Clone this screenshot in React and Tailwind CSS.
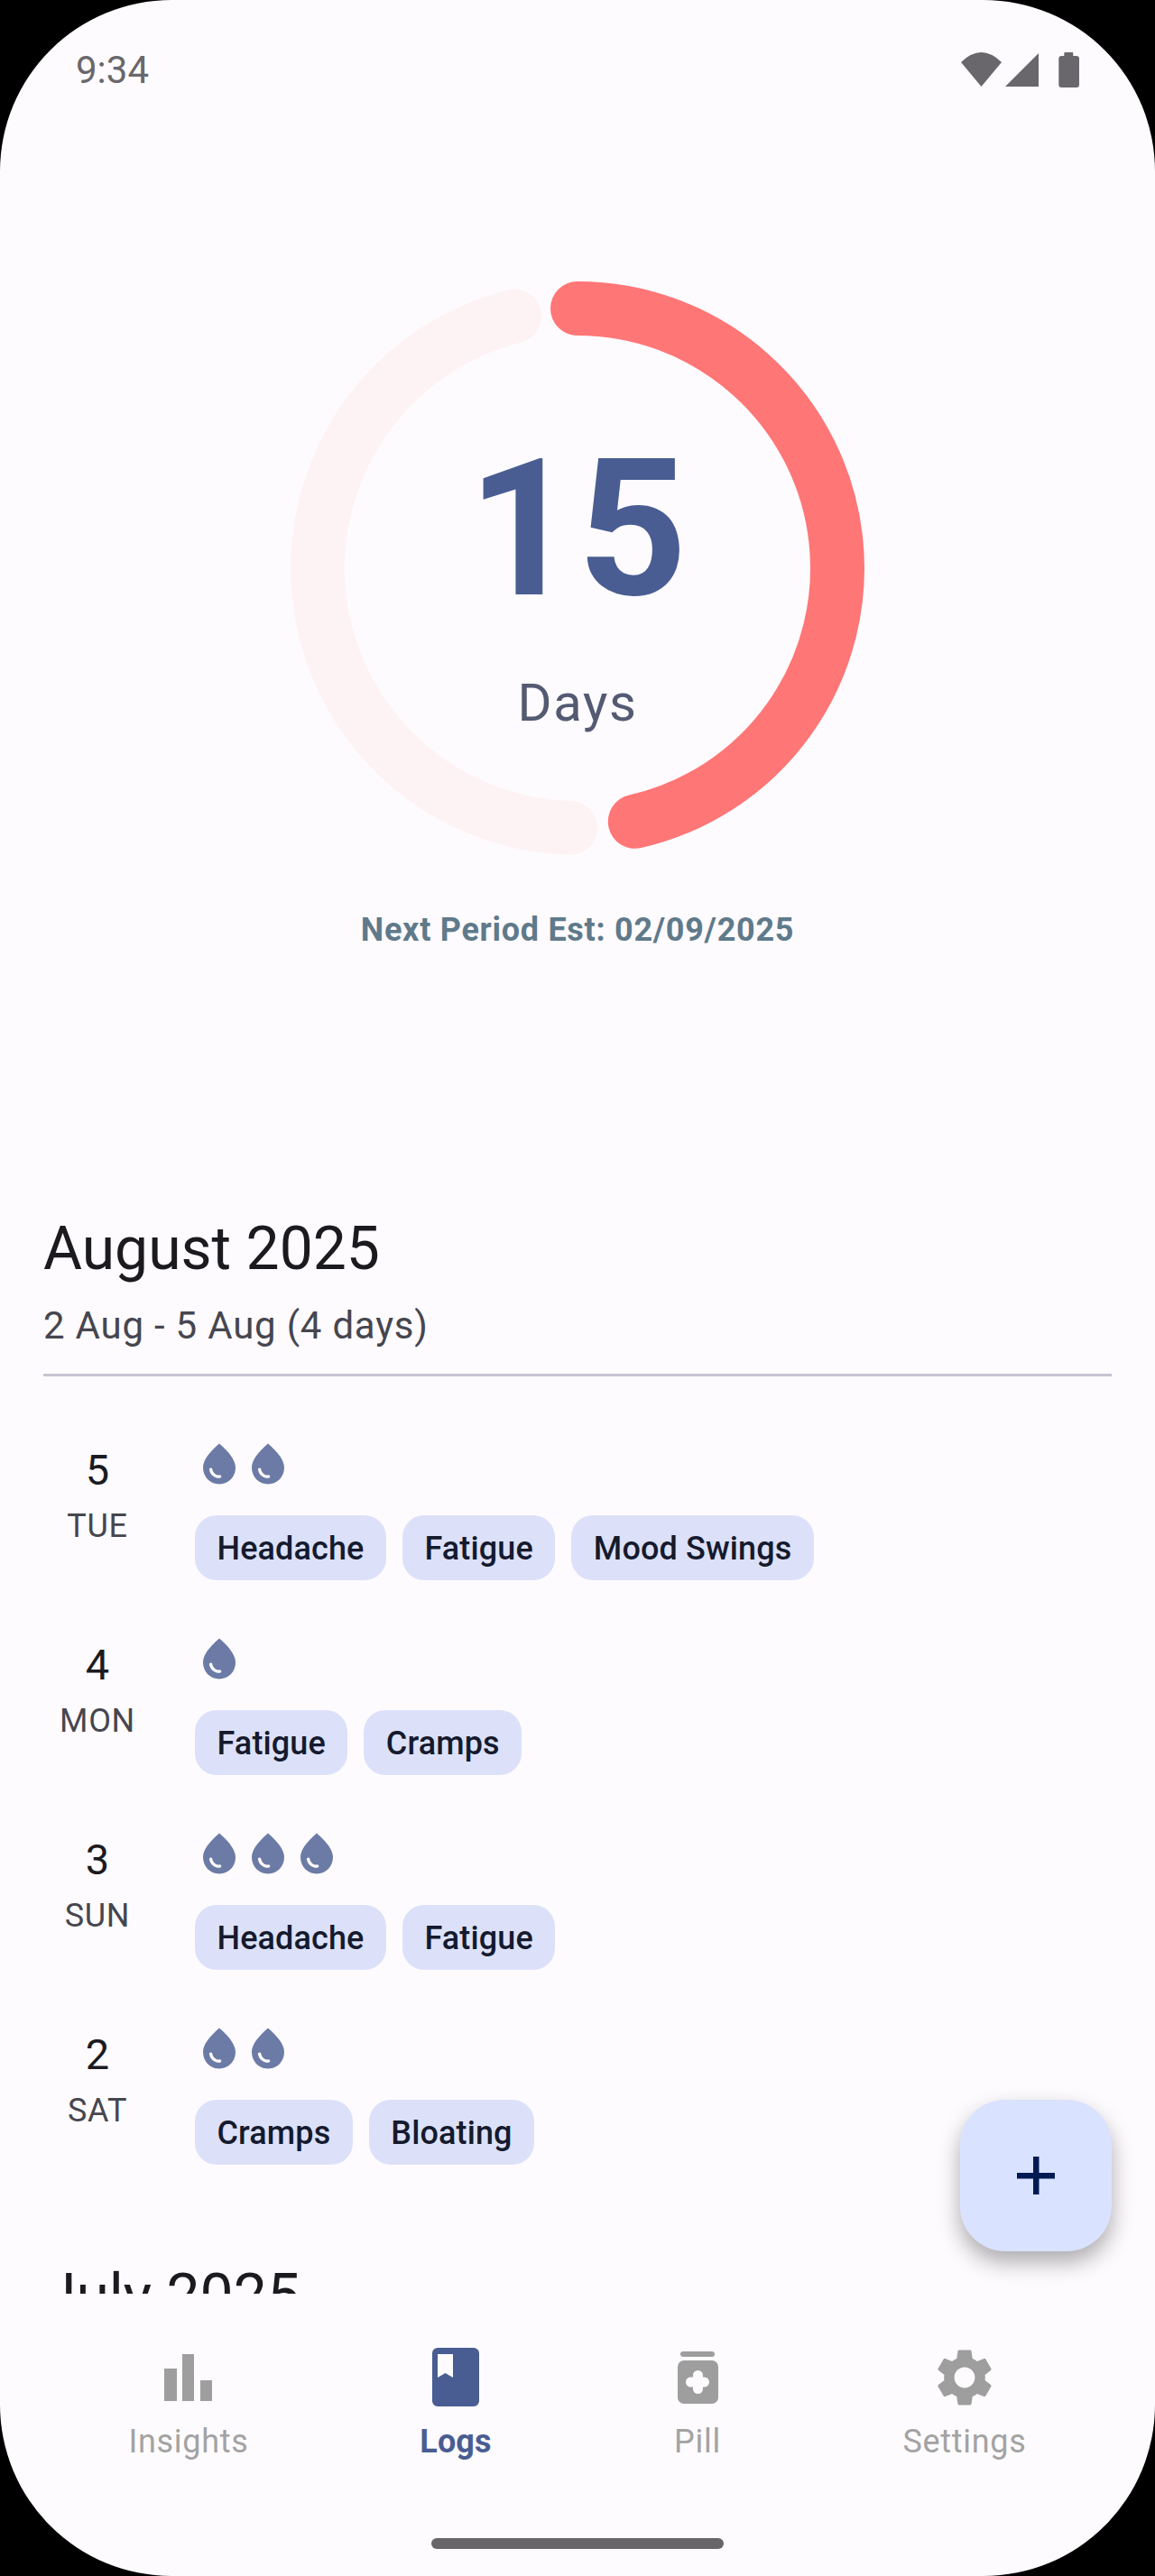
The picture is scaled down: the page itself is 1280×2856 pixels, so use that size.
const polar = (deg) => {
  const a = (deg * Math.PI) / 180;
  return [320 + 288 * Math.sin(a), 320 - 288 * Math.cos(a)];
};
const arc = (from, to) => {
  const [x1, y1] = polar(from);
  const [x2, y2] = polar(to);
  return `M${x1} ${y1}A288 288 0 0 1 ${x2} ${y2}`;
};

const Drop = () => (
  <svg viewBox="0 0 24 24" className="w-[54px] h-[54px] shrink-0" fill="#6b7ba6">
    <path
      fillRule="evenodd"
      d="M12 2c-5.33 4.55-8 8.48-8 11.8 0 4.98 3.8 8.2 8 8.2s8-3.22 8-8.2c0-3.32-2.67-7.25-8-11.8z M7.83 14c.37 0 .67.26.74.62.41 2.22 2.28 2.98 3.64 2.87.43-.02.79.32.79.75 0 .4-.32.73-.72.75-2.13.13-4.62-1.09-5.19-4.12-.08-.45.28-.87.74-.87z"
    />
  </svg>
);

const Chip = ({ label }) => (
  <div className="h-[72px] px-[24.5px] pt-[2px] rounded-[24px] bg-[#dce1f9] flex items-center text-[36px] tracking-[0.12px] font-medium text-[#151a2e]">
    {label}
  </div>
);

const Row = ({ day, dow, drops, chips }) => (
  <div className="flex gap-[48px] mb-[60px]">
    <div className="w-[120px] text-center pt-[6px]">
      <div className="text-[47px] leading-[56px] font-[450] text-[#1b1b1f]">{day}</div>
      <div className="text-[36px] leading-[44px] mt-[12px] tracking-[0.7px] text-[#46464f]">{dow}</div>
    </div>
    <div>
      <div className="flex h-[54px] mb-[30px]">
        {Array.from({ length: drops }).map((_, i) => (
          <Drop key={i} />
        ))}
      </div>
      <div className="flex gap-[18px]">
        {chips.map((c) => (
          <Chip key={c} label={c} />
        ))}
      </div>
    </div>
  </div>
);

const NavItem = ({ label, active, children }) => (
  <div className="flex flex-col items-center">
    <svg viewBox="0 0 76 76" className="w-[76px] h-[76px]">
      {children}
    </svg>
    <div
      className={
        active
          ? "mt-[9px] text-[36px] leading-[48px] tracking-[0.1px] font-bold text-[#495d92]"
          : "mt-[9px] text-[36px] leading-[48px] tracking-[0.7px] text-[#a3a3a3]"
      }
    >
      {label}
    </div>
  </div>
);

export default function App() {
  return (
    <div className="w-[1280px] h-[2856px] bg-black font-['Roboto',sans-serif]">
      <div className="relative w-full h-full rounded-[190px] overflow-hidden bg-[#fefbff] flex flex-col">
        <div className="flex-1 min-h-0 overflow-hidden">
          <div className="h-[154px] px-[84px] flex items-center justify-between">
            <span className="text-[42px] leading-[50px] pt-[2px] text-[#69676b]">9:34</span>
            <svg viewBox="0 0 131 39" className="w-[131px] h-[39px]" fill="#69676b">
              <path d="M0 11Q22.5 -11 45 11L22.5 38Z" />
              <path d="M49 38L86 1V38Z" />
              <rect x="108.3" y="4" width="22.7" height="35" rx="3" />
              <rect x="114.3" y="0" width="10" height="6" rx="1" />
            </svg>
          </div>

          <div className="relative w-[640px] h-[640px] mx-auto mt-[156px]">
            <svg viewBox="0 0 640 640" className="w-[640px] h-[640px]" fill="none" strokeWidth="60" strokeLinecap="round">
              <path d={arc(181.6, 346)} stroke="#fef3f4" />
              <path d={arc(0, 167.2)} stroke="#ff7676" />
            </svg>
            <div className="absolute inset-0 flex flex-col items-center">
              <div className="mt-[157px] text-[212px] leading-[240px] font-bold text-[#495d92]">15</div>
              <div className="mt-[37px] text-[58px] leading-[70px] tracking-[1.6px] text-[#535a72]">Days</div>
            </div>
          </div>

          <div className="mt-[59px] text-center text-[36px] leading-[44px] font-bold tracking-[0.72px] text-[#5f7a8a]">
            Next Period Est: 02/09/2025
          </div>

          <div className="px-[48px] mt-[292px]">
            <div className="text-[66px] leading-[80px] text-[#1b1b1f]">August 2025</div>
            <div className="mt-[18px] text-[42px] leading-[54px] tracking-[0.78px] text-[#46464f]">2 Aug - 5 Aug (4 days)</div>
            <div className="mt-[26px] h-[3px] bg-[#c6c5d0]" />
            <div className="mt-[70px]">
              <Row day="5" dow="TUE" drops={2} chips={["Headache", "Fatigue", "Mood Swings"]} />
              <Row day="4" dow="MON" drops={1} chips={["Fatigue", "Cramps"]} />
              <Row day="3" dow="SUN" drops={3} chips={["Headache", "Fatigue"]} />
              <Row day="2" dow="SAT" drops={2} chips={["Cramps", "Bloating"]} />
            </div>
            <div className="mt-[106px] text-[66px] leading-[80px] text-[#1b1b1f]">July 2025</div>
          </div>
        </div>

        <div className="h-[313px] shrink-0 pt-[55px]">
          <div className="grid grid-cols-[296px_296px_240px_352px] pl-[61px]">
            <NavItem label="Insights">
              <g fill="#9e9e9e">
                <rect x="11" y="28" width="14" height="36" />
                <rect x="31" y="12" width="13" height="52" />
                <rect x="51" y="41" width="13" height="23" />
              </g>
            </NavItem>
            <NavItem label="Logs" active>
              <path
                fill="#495d92"
                fillRule="evenodd"
                d="M18 5H58A6 6 0 0 1 64 11V64A6 6 0 0 1 58 70H18A6 6 0 0 1 12 64V11A6 6 0 0 1 18 5ZM18 12V38L26.5 33L35 38V12Z"
              />
            </NavItem>
            <NavItem label="Pill">
              <rect x="19" y="9" width="38" height="6" rx="3" fill="#9e9e9e" />
              <rect x="16" y="19" width="45" height="48" rx="7" fill="#9e9e9e" />
              <rect x="33" y="30" width="11" height="26" rx="5.5" fill="#fefbff" />
              <rect x="25" y="37.5" width="26" height="11" rx="5.5" fill="#fefbff" />
            </NavItem>
            <NavItem label="Settings">
              <g transform="scale(3.1667)">
                <path
                  fill="#9e9e9e"
                  d="M19.14 12.94c.04-.3.06-.61.06-.94 0-.32-.02-.64-.07-.94l2.03-1.58c.18-.14.23-.41.12-.61l-1.92-3.32c-.12-.22-.37-.29-.59-.22l-2.39.96c-.5-.38-1.03-.7-1.62-.94l-.36-2.54c-.04-.24-.24-.41-.48-.41h-3.84c-.24 0-.43.17-.47.41l-.36 2.54c-.59.24-1.13.57-1.62.94l-2.39-.96c-.22-.08-.47 0-.59.22L2.74 8.87c-.12.21-.08.47.12.61l2.03 1.58c-.05.3-.09.63-.09.94s.02.64.07.94l-2.03 1.58c-.18.14-.23.41-.12.61l1.92 3.32c.12.22.37.29.59.22l2.39-.96c.5.38 1.03.7 1.62.94l.36 2.54c.05.24.24.41.48.41h3.84c.24 0 .44-.17.47-.41l.36-2.54c.59-.24 1.13-.56 1.62-.94l2.39.96c.22.08.47 0 .59-.22l1.92-3.32c.12-.22.07-.47-.12-.61l-2.01-1.58zM12 15.6c-1.98 0-3.6-1.62-3.6-3.6s1.62-3.6 3.6-3.6 3.6 1.62 3.6 3.6-1.62 3.6-3.6 3.6z"
                />
              </g>
            </NavItem>
          </div>
          <div className="mt-[83px] w-[324px] h-[12px] mx-auto rounded-full bg-[#686669]" />
        </div>

        <div className="absolute right-[48px] bottom-[360px] w-[168px] h-[168px] rounded-[50px] bg-[#d9e2ff] shadow-[0_12px_24px_rgba(0,0,0,0.32)] flex items-center justify-center">
          <svg viewBox="0 0 42 42" className="w-[42px] h-[42px]" fill="#001a52">
            <rect x="18" y="0" width="6.5" height="42" />
            <rect x="0" y="18" width="42" height="6.5" />
          </svg>
        </div>
      </div>
    </div>
  );
}
